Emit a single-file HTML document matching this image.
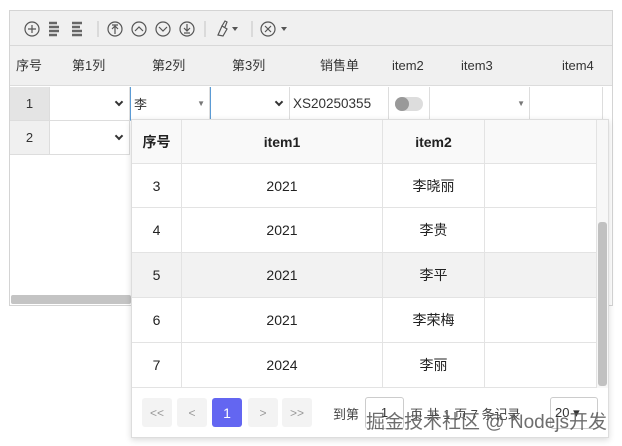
<!DOCTYPE html>
<html><head><meta charset="utf-8"><style>
*{box-sizing:border-box;margin:0;padding:0}
body{width:622px;height:446px;background:#fff;font-family:"Liberation Sans","Noto Sans CJK SC",sans-serif;font-size:13px;color:#333;position:relative;overflow:hidden}
.a{position:absolute}
.grid{left:9px;top:10px;width:604px;height:296px;border:1px solid #d4d4d4;background:#fff}
.tb{left:10px;top:11px;width:602px;height:35px;background:#f0f0f0;border-bottom:1px solid #d8d8d8}
.hd{left:10px;top:46px;width:602px;height:40px;background:#f0f0f0;border-bottom:1px solid #dcdcdc}
.hd span{position:absolute;top:0;line-height:40px;font-size:13px;color:#333}
.c{position:absolute;border-right:1px solid #ddd;border-bottom:1px solid #ddd;background:#fff;display:flex;align-items:center;justify-content:center}
.chev{position:absolute;right:7px;top:12px;width:6px;height:6px;border-right:2px solid #333;border-bottom:2px solid #333;transform:rotate(45deg)}
.tri{position:absolute;font-size:8px;color:#777}
.pop{left:131px;top:119px;width:478px;height:319px;background:#fff;border:1px solid #ddd;box-shadow:0 2px 6px rgba(0,0,0,.15)}
.pc{position:absolute;border-right:1px solid #e3e3e3;border-bottom:1px solid #e3e3e3;display:flex;align-items:center;justify-content:center;font-size:14px;color:#222}
.pb{position:absolute;top:398px;height:29px;width:30px;background:#f3f3f3;border-radius:3px;color:#999;font-size:12px;display:flex;align-items:center;justify-content:center}
svg{position:absolute}
</style></head><body>
<div class="a grid"></div>
<div class="a tb"></div>
<svg style="left:20px;top:19px" width="270" height="20" viewBox="0 0 270 20" fill="none" stroke="#555" stroke-width="1.2">
<circle cx="12" cy="10" r="7"/><path d="M12 6v8M8 10h8"/>
<path d="M29 4h8M29 8h10M29 12h10M29 16h8" stroke-width="2.5" stroke="#666"/>
<path d="M52 4h10M52 8h8M52 12h10M52 16h10" stroke-width="2.5" stroke="#666"/>
<path d="M78 2v16" stroke="#ccc"/>
<circle cx="95" cy="10" r="7"/><path d="M92 6h6M95 8v7M92 10l3-3 3 3"/>
<circle cx="119" cy="10" r="7"/><path d="M115 12l4-4 4 4"/>
<circle cx="143" cy="10" r="7"/><path d="M139 8l4 4 4-4"/>
<circle cx="167" cy="10" r="7"/><path d="M164 14h6M167 5v7M164 9l3 3 3-3"/>
<path d="M185 2v16" stroke="#ccc"/>
<path d="M198 16l4-9 5 3-4 7zM202 7l3-5 2 1-2 5"/>
<path d="M212 8l3 4 3-4z" fill="#555" stroke="none"/>
<path d="M232 2v16" stroke="#ccc"/>
<circle cx="248" cy="10" r="7"/><path d="M245 7l6 6M251 7l-6 6"/>
<path d="M261 8l3 4 3-4z" fill="#555" stroke="none"/>
</svg>
<div class="a hd">
<span style="left:6px">序号</span><span style="left:62px">第1列</span><span style="left:142px">第2列</span><span style="left:222px">第3列</span><span style="left:310px">销售单</span><span style="left:382px">item2</span><span style="left:451px">item3</span><span style="left:552px">item4</span>
</div>
<div class="c" style="left:10px;top:87px;width:40px;height:34px;background:#e4e4e4">1</div>
<div class="c" style="left:50px;top:87px;width:80px;height:34px"><i class="chev"></i></div>
<div class="c" style="left:130px;top:87px;width:80px;height:34px;border-left:1px solid #5b9bd5;justify-content:flex-start;padding-left:3px">李<span class="tri" style="right:4px;top:12px">▼</span></div>
<div class="c" style="left:210px;top:87px;width:80px;height:34px;border-left:1px solid #5b9bd5"><i class="chev"></i></div>
<div class="c" style="left:290px;top:87px;width:99px;height:34px;justify-content:flex-start;padding-left:3px;font-size:13.5px">XS20250355</div>
<div class="c" style="left:389px;top:87px;width:41px;height:34px"><span style="width:28px;height:14px;border-radius:7px;background:#ddd;position:relative"><span style="position:absolute;left:0;top:0;width:14px;height:14px;border-radius:7px;background:#999"></span></span></div>
<div class="c" style="left:430px;top:87px;width:100px;height:34px"><span class="tri" style="right:4px;top:12px">▼</span></div>
<div class="c" style="left:530px;top:87px;width:73px;height:34px"></div>
<div class="c" style="left:10px;top:121px;width:40px;height:34px;background:#f0f0f0">2</div>
<div class="c" style="left:50px;top:121px;width:80px;height:34px"><i class="chev"></i></div>
<div class="a" style="left:11px;top:295px;width:120px;height:9px;background:#c4c4c4;border-radius:2px"></div>
<div class="a pop"></div>
<div class="pc" style="left:132px;top:120px;width:50px;height:44px;background:#f9f9f9;font-weight:bold">序号</div>
<div class="pc" style="left:182px;top:120px;width:201px;height:44px;background:#f9f9f9;font-weight:bold">item1</div>
<div class="pc" style="left:383px;top:120px;width:102px;height:44px;background:#f9f9f9;font-weight:bold">item2</div>
<div class="pc" style="left:485px;top:120px;width:112px;height:44px;background:#f9f9f9"></div>
<div class="pc" style="left:132px;top:164px;width:50px;height:44px">3</div><div class="pc" style="left:182px;top:164px;width:201px;height:44px">2021</div><div class="pc" style="left:383px;top:164px;width:102px;height:44px">李晓丽</div><div class="pc" style="left:485px;top:164px;width:112px;height:44px"></div>
<div class="pc" style="left:132px;top:208px;width:50px;height:45px">4</div><div class="pc" style="left:182px;top:208px;width:201px;height:45px">2021</div><div class="pc" style="left:383px;top:208px;width:102px;height:45px">李贵</div><div class="pc" style="left:485px;top:208px;width:112px;height:45px"></div>
<div class="pc" style="left:132px;top:253px;width:50px;height:45px;background:#f2f2f2">5</div><div class="pc" style="left:182px;top:253px;width:201px;height:45px;background:#f2f2f2">2021</div><div class="pc" style="left:383px;top:253px;width:102px;height:45px;background:#f2f2f2">李平</div><div class="pc" style="left:485px;top:253px;width:112px;height:45px;background:#f2f2f2"></div>
<div class="pc" style="left:132px;top:298px;width:50px;height:45px">6</div><div class="pc" style="left:182px;top:298px;width:201px;height:45px">2021</div><div class="pc" style="left:383px;top:298px;width:102px;height:45px">李荣梅</div><div class="pc" style="left:485px;top:298px;width:112px;height:45px"></div>
<div class="pc" style="left:132px;top:343px;width:50px;height:45px">7</div><div class="pc" style="left:182px;top:343px;width:201px;height:45px">2024</div><div class="pc" style="left:383px;top:343px;width:102px;height:45px">李丽</div><div class="pc" style="left:485px;top:343px;width:112px;height:45px"></div>
<div class="a" style="left:597px;top:120px;width:11px;height:268px;background:#f7f7f7"></div>
<div class="a" style="left:598px;top:222px;width:9px;height:164px;background:#c1c1c1;border-radius:3px"></div>
<div class="pb" style="left:142px">&lt;&lt;</div>
<div class="pb" style="left:177px">&lt;</div>
<div class="pb" style="left:212px;background:#6366f1;color:#fff;font-size:14px">1</div>
<div class="pb" style="left:248px">&gt;</div>
<div class="pb" style="left:282px">&gt;&gt;</div>
<div class="a" style="left:333px;top:404px;font-size:13px;color:#444">到第</div>
<div class="a" style="left:365px;top:397px;width:39px;height:32px;border:1px solid #ccc;border-radius:3px;text-align:center;line-height:30px">1</div>
<div class="a" style="left:410px;top:404px;font-size:13px;color:#444">页 共 1 页 7 条记录</div>
<div class="a" style="left:550px;top:397px;width:48px;height:32px;border:1px solid #ccc;border-radius:3px;padding-left:4px;line-height:30px">20 ▾</div>
<div class="a" style="left:366px;top:407px;font-size:19px;color:#555;opacity:.85;white-space:nowrap">掘金技术社区 @ Nodejs开发</div>
</body></html>
